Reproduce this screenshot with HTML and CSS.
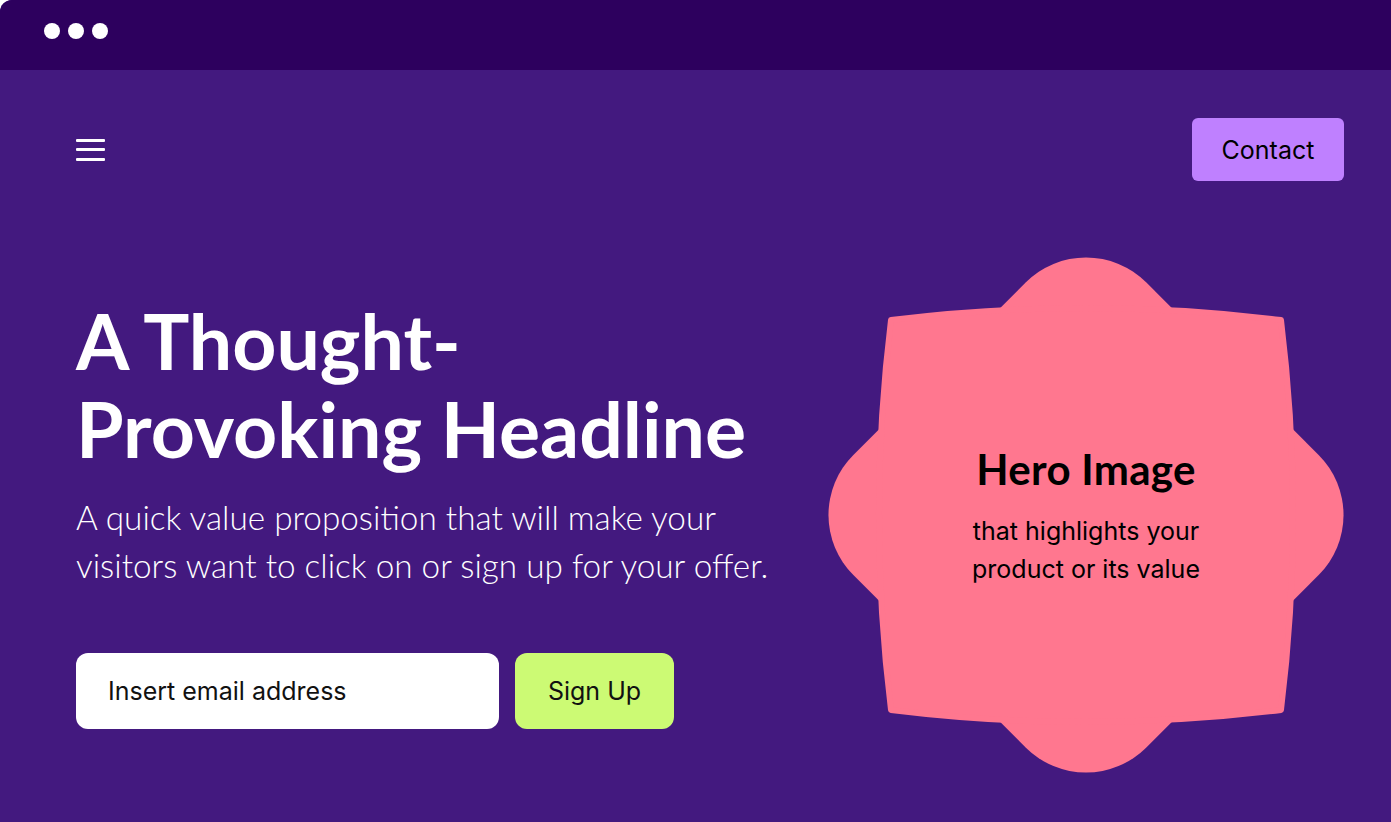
FILE: index.html
```html
<!DOCTYPE html>
<html lang="en">
<head>
<meta charset="utf-8">
<title>Landing page</title>
<link rel="stylesheet" href="styles.css">
</head>
<body>
<div class="window">
  <div class="titlebar">
    <span class="dot"></span><span class="dot"></span><span class="dot"></span>
  </div>
  <main class="page">
    <nav class="nav">
      <button class="menu" aria-label="Menu">
        <span class="bar"></span><span class="bar"></span><span class="bar"></span>
      </button>
      <a class="contact" href="#">Contact</a>
    </nav>
    <section class="hero">
      <div class="copy">
        <h1 class="headline">A Thought-<br>Provoking Headline</h1>
        <p class="lead">A quick value proposition that will make your visitors want to click on or sign up for your offer.</p>
        <form class="signup">
          <div class="email">Insert email address</div>
          <button class="signup-btn" type="button">Sign Up</button>
        </form>
      </div>
      <div class="visual">
        <svg class="flower" viewBox="-258 -258 516 516" width="516" height="516" aria-hidden="true">
          <rect x="-207" y="-207" width="414" height="414" rx="85" transform="rotate(45)" fill="#ff778f"/>
          <path d="M-195,-195 Q0,-219 195,-195 Q219,0 195,195 Q0,219 -195,195 Q-219,0 -195,-195 Z" fill="#ff778f" stroke="#ff778f" stroke-width="6" stroke-linejoin="round"/>
        </svg>
        <div class="visual-text">
          <h2 class="visual-title">Hero Image</h2>
          <p class="visual-sub">that highlights your<br>product or its value</p>
        </div>
      </div>
    </section>
  </main>
</div>
</body>
</html>
```
FILE: styles.css
```css
* { box-sizing: border-box; }
html, body { margin: 0; padding: 0; }
body {
  background: #ffffff;
  width: 1391px;
  height: 822px;
  overflow: hidden;
  font-family: "Inter", "Liberation Sans", sans-serif;
}
.window {
  height: 822px;
  background: #43197f;
  border-top-left-radius: 12px;
  overflow: hidden;
  display: flex;
  flex-direction: column;
}
.titlebar {
  height: 70px;
  background: #2d005e;
  display: flex;
  align-items: center;
  gap: 8px;
  padding-left: 44px;
  padding-bottom: 8px;
}
.dot {
  width: 16px;
  height: 16px;
  border-radius: 50%;
  background: #ffffff;
}
.page {
  flex: 1;
  padding: 48px 47px 0 76px;
}
.nav {
  display: flex;
  justify-content: space-between;
  align-items: center;
  height: 63px;
}
.menu {
  background: none;
  border: 0;
  padding: 0;
  width: 29px;
  display: flex;
  flex-direction: column;
  gap: 6.5px;
  cursor: pointer;
}
.bar {
  display: block;
  height: 3px;
  width: 29px;
  background: #ffffff;
  border-radius: 1px;
}
.contact {
  width: 152px;
  height: 63px;
  border-radius: 6px;
  background: #bf80ff;
  color: #000000;
  text-decoration: none;
  font-size: 25px;
  display: flex;
  align-items: center;
  justify-content: center;
}
.hero {
  margin-top: 76px;
  display: flex;
  align-items: flex-start;
  justify-content: space-between;
}
.copy {
  margin-top: 39px;
  display: flex;
  flex-direction: column;
}
.headline {
  margin: 0;
  color: #ffffff;
  font-family: "Lato", "Liberation Sans", sans-serif;
  font-weight: 700;
  font-size: 77px;
  line-height: 88px;
  letter-spacing: 0;
}
.lead {
  margin: 21px 0 0;
  width: 720px;
  color: #ffffff;
  font-family: "Lato", "Liberation Sans", sans-serif;
  font-weight: 300;
  font-size: 33.3px;
  line-height: 48px;
}
.signup {
  margin-top: 64px;
  display: flex;
  gap: 16px;
}
.email {
  width: 423px;
  height: 76px;
  border-radius: 12px;
  background: #ffffff;
  color: #111111;
  font-size: 25px;
  display: flex;
  align-items: center;
  padding-left: 32px;
}
.signup-btn {
  width: 159px;
  height: 76px;
  border: 0;
  border-radius: 12px;
  background: #ccfa74;
  color: #111111;
  font-family: "Inter", "Liberation Sans", sans-serif;
  font-size: 25px;
  cursor: pointer;
}
.visual {
  display: grid;
  width: 516px;
  height: 516px;
  place-items: center;
}
.flower, .visual-text {
  grid-area: 1 / 1;
}
.flower { display: block; }
.visual-text {
  text-align: center;
  color: #000000;
  padding-top: 3px;
}
.visual-title {
  margin: 0;
  font-family: "Lato", "Liberation Sans", sans-serif;
  font-weight: 700;
  font-size: 42px;
  line-height: 48px;
  letter-spacing: 0.3px;
}
.visual-sub {
  margin: 19px 0 0;
  font-size: 25px;
  line-height: 38px;
}
```
